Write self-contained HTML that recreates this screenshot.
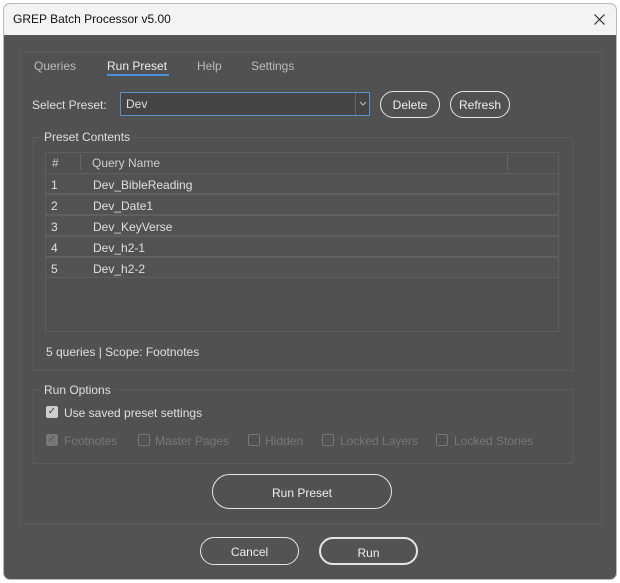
<!DOCTYPE html>
<html><head><style>
*{box-sizing:border-box;margin:0;padding:0}
body{width:620px;height:583px;background:#fff;font-family:"Liberation Sans",sans-serif;font-size:12px;color:#e0e0e0;position:relative;overflow:hidden}
.a{position:absolute}
.win{left:3px;top:3px;width:614px;height:577px;background:#535353;border-radius:7px;overflow:hidden;border:1px solid #bbb}
.title{left:0;top:0;width:100%;height:31px;background:#f3f3f3;color:#111;font-size:12px;padding:8px 9px}
.btn{border:1.5px solid #e6e6e6;border-radius:14px;text-align:center;color:#eee}
.row{left:45px;width:514px;height:21px;border:1px solid #5f5f5f;background:#525252}
.row span{position:absolute;top:4px}
.cb{width:12px;height:12px;border:1px solid #777;border-radius:2px}
.dis{color:#777}
</style></head><body>
<div class="a win">
<div class="a title">GREP Batch Processor v5.00
<svg class="a" style="right:11px;top:10px" width="11" height="11" viewBox="0 0 11 11"><path d="M0.5 0.5L10.5 10.5M10.5 0.5L0.5 10.5" stroke="#222" stroke-width="1.1"/></svg></div>
</div>
<div class="a" style="left:20px;top:52px;width:582px;height:472px;border:1px solid #5c5c5c;background:#515151"></div>
<div class="a" style="left:34px;top:59px;color:#bbb">Queries</div>
<div class="a" style="left:107px;top:59px;color:#eee">Run Preset</div>
<div class="a" style="left:107px;top:74px;width:62px;height:2px;background:#4a90d9"></div>
<div class="a" style="left:197px;top:59px;color:#bbb">Help</div>
<div class="a" style="left:251px;top:59px;color:#bbb">Settings</div>
<div class="a" style="left:32px;top:98px">Select Preset:</div>
<div class="a" style="left:120px;top:92px;width:250px;height:24px;border:1px solid #5b8fce;background:#454545;padding:4px 5px">Dev</div>
<div class="a" style="left:355px;top:93px;width:1px;height:22px;background:#666"></div>
<svg class="a" style="left:359px;top:101px" width="8" height="5" viewBox="0 0 8 5"><path d="M1 1L4 4L7 1" stroke="#bbb" fill="none"/></svg>
<div class="a btn" style="left:380px;top:91px;width:60px;height:27px;padding-top:6px">Delete</div>
<div class="a btn" style="left:450px;top:91px;width:60px;height:27px;padding-top:6px">Refresh</div>
<div class="a" style="left:33px;top:137px;width:540px;height:234px;border:1px solid #5c5c5c"></div>
<div class="a" style="left:40px;top:130px;background:#515151;padding:0 4px">Preset Contents</div>
<div class="a" style="left:45px;top:152px;width:514px;height:180px;border:1px solid #5f5f5f;background:#505050"></div>
<div class="a" style="left:52px;top:156px;color:#ccc">#</div>
<div class="a" style="left:80px;top:154px;width:1px;height:16px;background:#666"></div>
<div class="a" style="left:92px;top:156px;color:#ccc">Query Name</div>
<div class="a" style="left:507px;top:154px;width:1px;height:16px;background:#666"></div>
<div class="a row" style="top:173px"><span style="left:5px">1</span><span style="left:47px">Dev_BibleReading</span></div>
<div class="a row" style="top:194px"><span style="left:5px">2</span><span style="left:47px">Dev_Date1</span></div>
<div class="a row" style="top:215px"><span style="left:5px">3</span><span style="left:47px">Dev_KeyVerse</span></div>
<div class="a row" style="top:236px"><span style="left:5px">4</span><span style="left:47px">Dev_h2-1</span></div>
<div class="a row" style="top:257px"><span style="left:5px">5</span><span style="left:47px">Dev_h2-2</span></div>
<div class="a" style="left:46px;top:345px">5 queries | Scope: Footnotes</div>
<div class="a" style="left:33px;top:389px;width:540px;height:75px;border:1px solid #5c5c5c"></div>
<div class="a" style="left:40px;top:383px;background:#515151;padding:0 4px">Run Options</div>
<div class="a cb" style="left:46px;top:406px;background:#ccc;border-color:#ccc;color:#444;font-size:10px;line-height:10px;text-align:center">✓</div>
<div class="a" style="left:64px;top:406px">Use saved preset settings</div>
<div class="a cb" style="left:46px;top:434px;background:#777;color:#555;font-size:10px;line-height:10px;text-align:center">✓</div>
<div class="a dis" style="left:64px;top:434px">Footnotes</div>
<div class="a cb" style="left:138px;top:434px"></div><div class="a dis" style="left:155px;top:434px">Master Pages</div>
<div class="a cb" style="left:248px;top:434px"></div><div class="a dis" style="left:265px;top:434px">Hidden</div>
<div class="a cb" style="left:322px;top:434px"></div><div class="a dis" style="left:340px;top:434px">Locked Layers</div>
<div class="a cb" style="left:436px;top:434px"></div><div class="a dis" style="left:454px;top:434px">Locked Stories</div>
<div class="a btn" style="left:212px;top:474px;width:180px;height:35px;border-radius:18px;padding-top:11px">Run Preset</div>
<div class="a btn" style="left:200px;top:537px;width:99px;height:28px;padding-top:7px">Cancel</div>
<div class="a btn" style="left:319px;top:537px;width:99px;height:28px;padding-top:7px;border-width:2px">Run</div>
</body></html>
